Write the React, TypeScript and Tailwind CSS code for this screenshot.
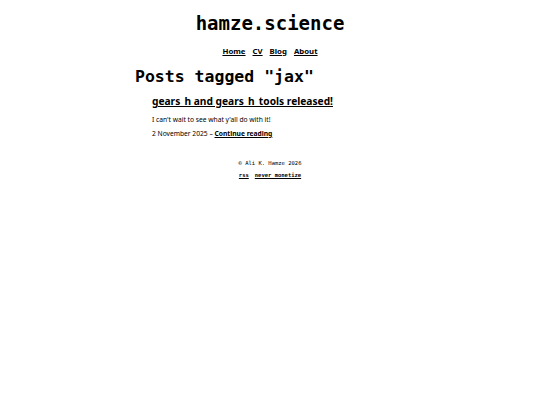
export default function App() {
  const mono = { fontFamily: '"DejaVu Sans Mono", monospace' };
  return (
    <div className="min-h-screen bg-white text-black" style={{ fontFamily: '"Noto Sans", sans-serif' }}>
      <div className="mx-auto w-[270px]">
        <header className="pt-[10px] text-center">
          <h1 className="text-[19px] font-bold leading-[26px]" style={mono}>
            hamze.science
          </h1>
          <nav className="mt-[9px] flex justify-center gap-[7px] text-[7.8px] font-bold leading-[12px]">
            <a className="underline" href="#">Home</a>
            <a className="underline" href="#">CV</a>
            <a className="underline" href="#">Blog</a>
            <a className="underline" href="#">About</a>
          </nav>
        </header>
        <h2 className="mt-[9px] text-[16.5px] font-bold leading-[22px]" style={mono}>
          Posts tagged "jax"
        </h2>
        <article className="ml-[17px] mt-[6px]">
          <h3 className="text-[10.2px] font-bold leading-[14px]">
            <a className="underline" href="#">gears_h and gears_h_tools released!</a>
          </h3>
          <p className="mt-[7px] text-[6.7px] leading-[10px]">I can't wait to see what y'all do with it!</p>
          <p className="mt-[4px] text-[6.7px] leading-[10px]">
            2 November 2025 – <a className="font-bold underline" href="#">Continue reading</a>
          </p>
        </article>
        <footer className="mt-[20px] text-center text-[5.5px] leading-[8px]" style={mono}>
          <p>© Ali K. Hamze 2026</p>
          <p className="mt-[4px] flex justify-center gap-[6px] font-bold">
            <a className="underline" href="#">rss</a>
            <a className="underline" href="#">never monetize</a>
          </p>
        </footer>
      </div>
    </div>
  );
}
